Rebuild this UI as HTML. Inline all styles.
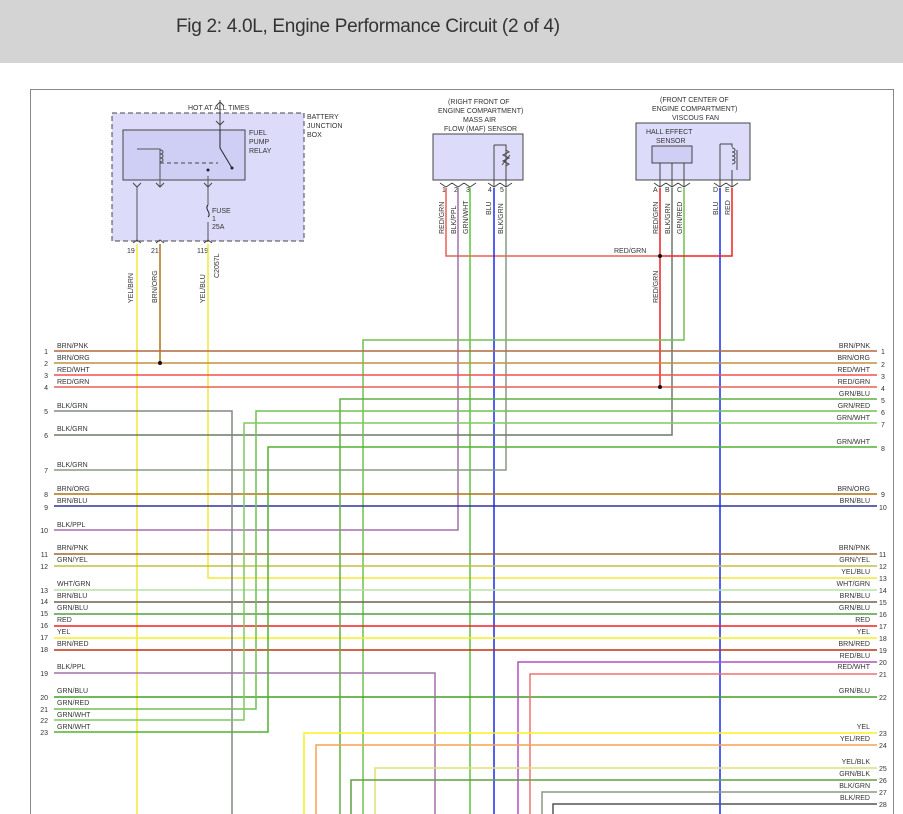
<!DOCTYPE html>
<html><head><meta charset="utf-8"><style>
html,body{margin:0;padding:0;background:#fff;width:903px;height:814px;overflow:hidden}
#hd{position:absolute;left:0;top:0;width:903px;height:63px;background:#d4d4d4}
#hd span{position:absolute;left:176px;top:16px;font:19px "Liberation Sans",sans-serif;color:#333;letter-spacing:-0.3px}
svg{position:absolute;left:0;top:0}
text{font-family:"Liberation Sans",sans-serif;font-size:7px;fill:#333}
</style></head><body>
<div id="hd"><span>Fig 2: 4.0L, Engine Performance Circuit (2 of 4)</span></div>
<svg width="903" height="814" viewBox="0 0 903 814">
<!-- frame -->
<path d="M30.5 814V89.5H893.5V814" fill="none" stroke="#888" stroke-width="1"/>
<!-- battery junction box -->
<rect x="112" y="113" width="192" height="128" fill="#dcdcfa" stroke="#444" stroke-dasharray="5,3"/>
<rect x="123" y="130" width="122" height="50" fill="#cfcff5" stroke="#444"/>
<text x="188" y="110">HOT AT ALL TIMES</text>
<text x="307" y="119">BATTERY</text><text x="307" y="128">JUNCTION</text><text x="307" y="137">BOX</text>
<text x="249" y="135">FUEL</text><text x="249" y="144">PUMP</text><text x="249" y="153">RELAY</text>
<path d="M220 100V130M216 106l4-4 4 4M216 121l4 4 4-4" stroke="#444" fill="none"/>
<path d="M220 130V148L232 168" stroke="#222" fill="none"/>
<path d="M160 163H218" stroke="#444" stroke-dasharray="4,3"/>
<path d="M160 150c4 0 4 4 0 4c4 0 4 4 0 4c4 0 4 4 0 4" stroke="#444" fill="none"/>
<path d="M137 187V242M137 149H160V187M208 176V205M208 222V242" stroke="#555" fill="none"/>
<path d="M208 205c-4 4 4 8 0 12" stroke="#222" fill="none"/>
<circle cx="208" cy="170" r="1.5" fill="#222"/><circle cx="232" cy="168" r="1.5" fill="#222"/>
<path d="M133 183l4 4 4-4M156 183l4 4 4-4M204 183l4 4 4-4M133 243l4-3 4 3M156 243l4-3 4 3M204 243l4-3 4 3" stroke="#444" fill="none"/>
<text x="212" y="213">FUSE</text><text x="212" y="221">1</text><text x="212" y="229">25A</text>
<text x="127" y="253">19</text><text x="151" y="253">21</text><text x="197" y="253">119</text>
<text transform="translate(133,303) rotate(-90)">YEL/BRN</text>
<text transform="translate(157,303) rotate(-90)">BRN/ORG</text>
<text transform="translate(205,303) rotate(-90)">YEL/BLU</text>
<text transform="translate(219,278) rotate(-90)">C2057L</text>
<!-- MAF -->
<text x="448" y="104">(RIGHT FRONT OF</text><text x="438" y="113">ENGINE COMPARTMENT)</text>
<text x="463" y="122">MASS AIR</text><text x="444" y="131">FLOW (MAF) SENSOR</text>
<rect x="433" y="134" width="90" height="46" fill="#dcdcfa" stroke="#444"/>
<path d="M494 145H506V187M494 145V187" stroke="#444" fill="none"/>
<path d="M506 150l3 2-6 3 6 3-6 3 6 3-3 2M502 165l8-10" stroke="#444" fill="none"/>
<text x="442" y="192">1</text><text x="454" y="192">2</text><text x="466" y="192">3</text><text x="488" y="192">4</text><text x="500" y="192">5</text>
<text transform="translate(444,234) rotate(-90)">RED/GRN</text>
<text transform="translate(456,234) rotate(-90)">BLK/PPL</text>
<text transform="translate(468,234) rotate(-90)">GRN/WHT</text>
<text transform="translate(491,215) rotate(-90)">BLU</text>
<text transform="translate(503,234) rotate(-90)">BLK/GRN</text>
<!-- Viscous fan -->
<text x="660" y="102">(FRONT CENTER OF</text><text x="652" y="111">ENGINE COMPARTMENT)</text>
<text x="672" y="120">VISCOUS FAN</text>
<rect x="636" y="123" width="114" height="57" fill="#dcdcfa" stroke="#444"/>
<text x="646" y="134">HALL EFFECT</text><text x="656" y="143">SENSOR</text>
<rect x="652" y="146" width="40" height="17" fill="#cfcff5" stroke="#444"/>
<path d="M660 163V187M672 163V187M684 163V187M720 144H732V147M720 144V187M732 170V187" stroke="#444" fill="none"/>
<path d="M732 148c4 0 4 4 0 4c4 0 4 4 0 4c4 0 4 4 0 4c4 0 4 4 0 4M737 150V170" stroke="#444" fill="none"/>
<text x="653" y="192">A</text><text x="665" y="192">B</text><text x="677" y="192">C</text><text x="713" y="192">D</text><text x="725" y="192">E</text>
<text transform="translate(658,234) rotate(-90)">RED/GRN</text>
<text transform="translate(670,234) rotate(-90)">BLK/GRN</text>
<text transform="translate(682,234) rotate(-90)">GRN/RED</text>
<text transform="translate(718,215) rotate(-90)">BLU</text>
<text transform="translate(730,215) rotate(-90)">RED</text>
<text x="614" y="253">RED/GRN</text>
<text transform="translate(658,303) rotate(-90)">RED/GRN</text>
<g fill="none" stroke-width="1.5">
<!-- connector arrows -->
<g stroke="#444" stroke-width="1"><path d="M440 183l6 4 6-4M452 183l6 4 6-4M464 183l6 4 6-4M488 183l6 4 6-4M500 183l6 4 6-4M654 183l6 4 6-4M666 183l6 4 6-4M678 183l6 4 6-4M714 183l6 4 6-4M726 183l6 4 6-4"/></g>
<!-- verticals from top -->
<path d="M137 244V814" stroke="#f4e83a"/>
<path d="M160 244V363" stroke="#b07010"/>
<path d="M208 244V578H877" stroke="#f4e83a"/>
<path d="M446 188V256H660" stroke="#e86050"/>
<path d="M458 188V530H54" stroke="#a070a8"/>
<path d="M470 188V814" stroke="#60c040"/>
<path d="M494 188V814" stroke="#1a2cf0"/>
<path d="M506 188V470H54" stroke="#889a80"/>
<path d="M660 188V387" stroke="#e82020"/>
<path d="M672 188V435H54" stroke="#6a7a66"/>
<path d="M684 188V340H363V814" stroke="#70c050"/>
<path d="M720 188V814" stroke="#1a2cf0"/>
<path d="M732 188V256H660" stroke="#f02020"/>
<!-- full-width rows -->
<path d="M54 351H877" stroke="#b06a40"/>
<path d="M54 363H877" stroke="#c09040"/>
<path d="M54 375H877" stroke="#f05050"/>
<path d="M54 387H877" stroke="#e86050"/>
<path d="M54 494H877" stroke="#b07010"/>
<path d="M54 506H877" stroke="#3030a0"/>
<path d="M54 554H877" stroke="#a06830"/>
<path d="M54 566H877" stroke="#c0c040"/>
<path d="M54 590H877" stroke="#b8e0a8"/>
<path d="M54 602H877" stroke="#706050"/>
<path d="M54 614H877" stroke="#50a040"/>
<path d="M54 626H877" stroke="#f02020"/>
<path d="M54 638H877" stroke="#f4f020"/>
<path d="M54 650H877" stroke="#c03010"/>
<path d="M54 697H877" stroke="#40a020"/>
<!-- left rows turning -->
<path d="M54 411H232V814" stroke="#808880"/>
<path d="M54 673H435V814" stroke="#a070a8"/>
<path d="M54 709H256V411H877" stroke="#70c050"/>
<path d="M54 720H244V423H877" stroke="#80c860"/>
<path d="M54 732H268V447H877" stroke="#50b030"/>
<path d="M340 814V399H877" stroke="#60b040"/>
<!-- right rows going down -->
<path d="M518 814V662H877" stroke="#b050c0"/>
<path d="M530 814V674H877" stroke="#f07070"/>
<path d="M304 814V733H877" stroke="#f8f020"/>
<path d="M316 814V745H877" stroke="#f8a050"/>
<path d="M375 814V768H877" stroke="#e0e070"/>
<path d="M351 814V780H877" stroke="#60a040"/>
<path d="M542 814V792H877" stroke="#889a80"/>
<path d="M553 814V804H877" stroke="#555"/>
</g>
<circle cx="160" cy="363" r="2" fill="#111"/><circle cx="660" cy="387" r="2" fill="#111"/><circle cx="660" cy="256" r="2" fill="#111"/>
<!-- left labels -->
<g>
<text x="57" y="348">BRN/PNK</text><text x="57" y="360">BRN/ORG</text><text x="57" y="372">RED/WHT</text><text x="57" y="384">RED/GRN</text>
<text x="57" y="408">BLK/GRN</text><text x="57" y="431">BLK/GRN</text><text x="57" y="467">BLK/GRN</text><text x="57" y="491">BRN/ORG</text>
<text x="57" y="503">BRN/BLU</text><text x="57" y="527">BLK/PPL</text><text x="57" y="550">BRN/PNK</text><text x="57" y="562">GRN/YEL</text>
<text x="57" y="586">WHT/GRN</text><text x="57" y="598">BRN/BLU</text><text x="57" y="610">GRN/BLU</text><text x="57" y="622">RED</text>
<text x="57" y="634">YEL</text><text x="57" y="646">BRN/RED</text><text x="57" y="669">BLK/PPL</text><text x="57" y="693">GRN/BLU</text>
<text x="57" y="705">GRN/RED</text><text x="57" y="717">GRN/WHT</text><text x="57" y="729">GRN/WHT</text>
</g>
<g text-anchor="end">
<text x="48" y="354">1</text><text x="48" y="366">2</text><text x="48" y="378">3</text><text x="48" y="390">4</text><text x="48" y="414">5</text>
<text x="48" y="438">6</text><text x="48" y="473">7</text><text x="48" y="497">8</text><text x="48" y="510">9</text><text x="48" y="533">10</text>
<text x="48" y="557">11</text><text x="48" y="569">12</text><text x="48" y="593">13</text><text x="48" y="604">14</text><text x="48" y="616">15</text>
<text x="48" y="628">16</text><text x="48" y="640">17</text><text x="48" y="652">18</text><text x="48" y="676">19</text><text x="48" y="700">20</text>
<text x="48" y="712">21</text><text x="48" y="723">22</text><text x="48" y="735">23</text>
<!-- right labels -->
<text x="870" y="348">BRN/PNK</text><text x="870" y="360">BRN/ORG</text><text x="870" y="372">RED/WHT</text><text x="870" y="384">RED/GRN</text>
<text x="870" y="396">GRN/BLU</text><text x="870" y="408">GRN/RED</text><text x="870" y="420">GRN/WHT</text><text x="870" y="444">GRN/WHT</text>
<text x="870" y="491">BRN/ORG</text><text x="870" y="503">BRN/BLU</text><text x="870" y="550">BRN/PNK</text><text x="870" y="562">GRN/YEL</text>
<text x="870" y="574">YEL/BLU</text><text x="870" y="586">WHT/GRN</text><text x="870" y="598">BRN/BLU</text><text x="870" y="610">GRN/BLU</text>
<text x="870" y="622">RED</text><text x="870" y="634">YEL</text><text x="870" y="646">BRN/RED</text><text x="870" y="658">RED/BLU</text>
<text x="870" y="669">RED/WHT</text><text x="870" y="693">GRN/BLU</text><text x="870" y="729">YEL</text><text x="870" y="741">YEL/RED</text>
<text x="870" y="764">YEL/BLK</text><text x="870" y="776">GRN/BLK</text><text x="870" y="788">BLK/GRN</text><text x="870" y="800">BLK/RED</text>
</g>
<g>
<text x="881" y="354">1</text><text x="881" y="367">2</text><text x="881" y="379">3</text><text x="881" y="391">4</text><text x="881" y="403">5</text>
<text x="881" y="415">6</text><text x="881" y="427">7</text><text x="881" y="451">8</text><text x="881" y="497">9</text><text x="879" y="510">10</text>
<text x="879" y="557">11</text><text x="879" y="569">12</text><text x="879" y="581">13</text><text x="879" y="593">14</text><text x="879" y="605">15</text>
<text x="879" y="617">16</text><text x="879" y="629">17</text><text x="879" y="641">18</text><text x="879" y="653">19</text><text x="879" y="665">20</text>
<text x="879" y="677">21</text><text x="879" y="700">22</text><text x="879" y="736">23</text><text x="879" y="748">24</text><text x="879" y="771">25</text>
<text x="879" y="783">26</text><text x="879" y="795">27</text><text x="879" y="807">28</text>
</g>
</svg>
</body></html>
